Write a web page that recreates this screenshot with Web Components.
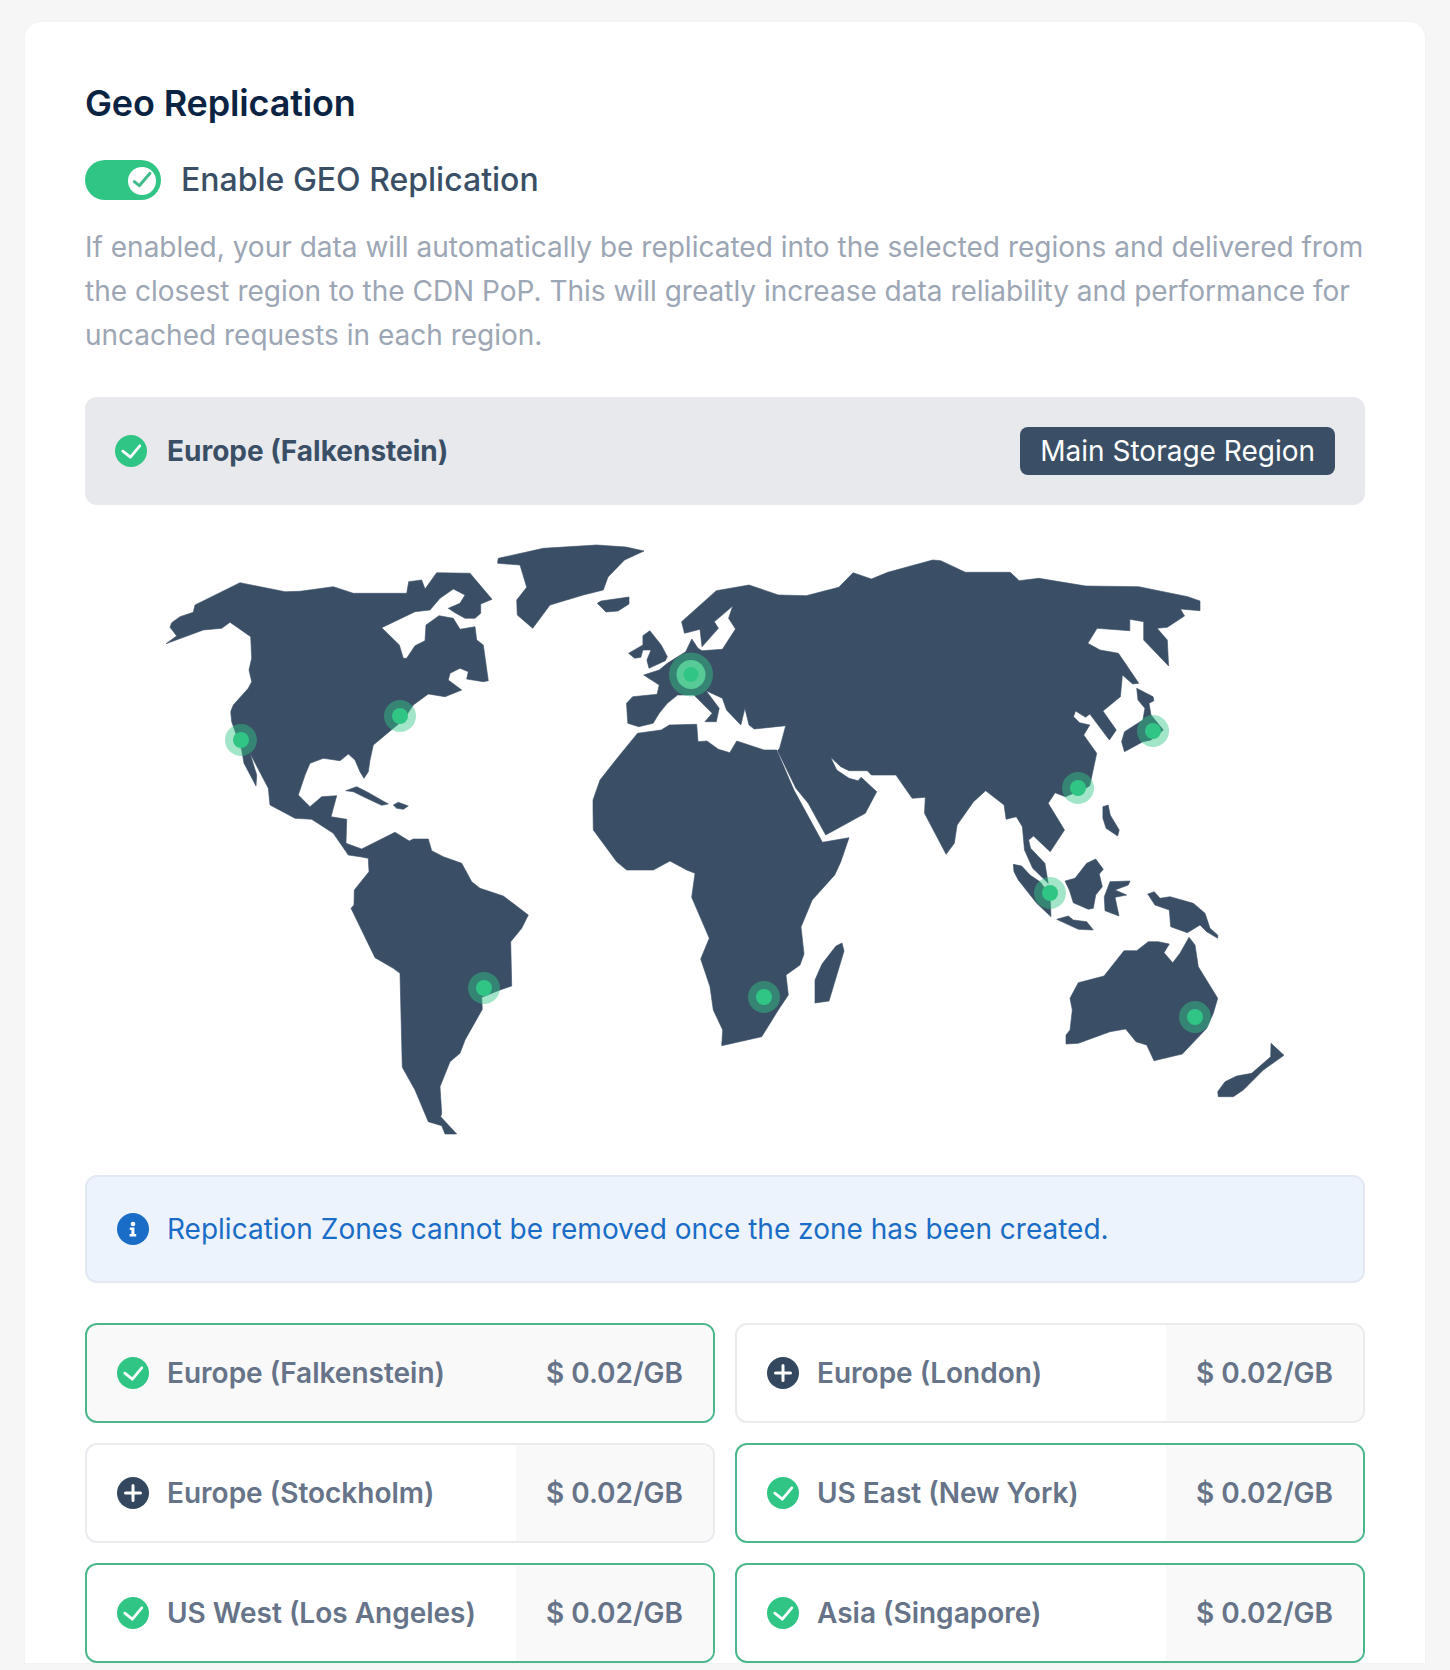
<!DOCTYPE html>
<html lang="en">
<head>
<meta charset="utf-8">
<title>Geo Replication</title>
<style>
html, body { margin: 0; height: 1670px; overflow: hidden; background: #f6f6f7; }
body { font-family: Inter, "Liberation Sans", sans-serif; padding: 22px 25px 0; box-sizing: border-box; }
</style>
</head>
<body>
<geo-card>
  <geo-heading>Geo Replication</geo-heading>
  <geo-toggle>Enable GEO Replication</geo-toggle>
  <geo-note>If enabled, your data will automatically be replicated into the selected regions and delivered from the closest region to the CDN PoP. This will greatly increase data reliability and performance for uncached requests in each region.</geo-note>
  <geo-banner badge="Main Storage Region">Europe (Falkenstein)</geo-banner>
  <world-map></world-map>
  <geo-alert>Replication Zones cannot be removed once the zone has been created.</geo-alert>
  <region-grid>
    <region-row selected main price="$ 0.02/GB">Europe (Falkenstein)</region-row>
    <region-row price="$ 0.02/GB">Europe (London)</region-row>
    <region-row price="$ 0.02/GB">Europe (Stockholm)</region-row>
    <region-row selected price="$ 0.02/GB">US East (New York)</region-row>
    <region-row selected price="$ 0.02/GB">US West (Los Angeles)</region-row>
    <region-row selected price="$ 0.02/GB">Asia (Singapore)</region-row>
  </region-grid>
</geo-card>
<script>
"use strict"
{
    const GREEN = '#31c585';
    const NAVY = '#3a4f66';

    // simple helper: every custom element here is just a style + markup in an open shadow root
    function define(tag, css, html, setup) {
        customElements.define(tag, class extends HTMLElement {
            constructor() {
                super();
                const shadow = this.attachShadow({ mode: 'open' });
                shadow.innerHTML = `<style>${css}</style>${html}`;
            }
            connectedCallback() {
                if (setup) setup(this, this.shadowRoot);
            }
        });
    }

    const icons = {
        check: `<circle cx="16" cy="16" r="16" fill="${GREEN}"/><path d="M7.8 16.2l7.6 6L24.8 10.8" fill="none" stroke="#fff" stroke-width="2.8" stroke-linecap="round" stroke-linejoin="round"/>`,
        plus: `<circle cx="16" cy="16" r="16" fill="#33475f"/><path d="M16 8.5v15M8.5 16h15" fill="none" stroke="#fff" stroke-width="3" stroke-linecap="round"/>`,
        info: `<circle cx="16" cy="16" r="16" fill="#1a6dc6"/><circle cx="16" cy="11" r="2.3" fill="#fff"/><path d="M12.8 14.6h4.6v6.4h1.8v2.4h-6.6v-2.4h1.8v-4h-1.6z" fill="#fff"/>`
    };

    define('geo-icon', `:host{display:block;width:32px;height:32px;flex:none}svg{display:block}`,
        `<svg width="32" height="32" viewBox="0 0 32 32"></svg>`,
        (el, root) => { root.querySelector('svg').innerHTML = icons[el.getAttribute('name')]; });

    define('geo-card', `
        :host{display:block;background:#fff;border-radius:16px 16px 0 0;padding:60px 60px 7px;height:1641px;box-sizing:border-box;box-shadow:0 0 0 1px #f3f3f4}
    `, `<slot></slot>`);

    define('geo-heading', `
        :host{display:block;font-size:36px;line-height:42px;font-weight:600;letter-spacing:-.15px;color:#0b2342;height:78px}
    `, `<slot></slot>`);

    define('geo-toggle', `
        :host{display:flex;align-items:center;gap:20px;height:40px;font-size:32px;font-weight:500;color:${NAVY}}
        .track{position:relative;width:76px;height:40px;border-radius:20px;background:${GREEN};flex:none}
        .knob{position:absolute;right:5px;top:7px;width:28px;height:28px;border-radius:50%;background:#fff}
        span{margin-bottom:2px}
        svg{display:block}
    `, `<div class="track"><div class="knob"><svg width="28" height="28" viewBox="0 0 28 28"><path d="M6.3 14.7l5 4L22 6.3" fill="none" stroke="#3dbb8a" stroke-width="3" stroke-linecap="round" stroke-linejoin="round"/></svg></div></div><span><slot></slot></span>`);

    define('geo-note', `
        :host{display:block;margin:25px 0 40px;font-size:28px;line-height:44px;color:#9ca6b4}
    `, `<slot></slot>`);

    define('geo-banner', `
        :host{display:flex;align-items:center;height:108px;box-sizing:border-box;padding:0 30px;background:#e7e9ed;border-radius:12px;font-size:28px;font-weight:700;color:${NAVY}}
        .name{margin-left:20px;flex:1}
        .badge{height:48px;line-height:48px;padding:0 20px;border-radius:8px;background:${NAVY};color:#fff;font-weight:400}
    `, `<geo-icon name="check"></geo-icon><span class="name"><slot></slot></span><span class="badge"></span>`,
        (el, root) => { root.querySelector('.badge').textContent = el.getAttribute('badge'); });

    // map outlines were traced from crops, so each crop gets its own origin and scale
    const seg = (ox, oy, sx, sy) => s => s.trim().split(/\s+/).map(p => {
        const [u, v] = p.split(',').map(Number);
        return (ox + u / sx).toFixed(1) + ' ' + (oy + v / sy).toFixed(1);
    });
    const am = seg(140, 530, 3, 3);
    const sa = seg(320, 820, 3, 3);
    const eu = seg(600, 540, 2.45, 3);
    const au = seg(950, 780, 3, 3);
    const pg = seg(0, 0, 1, 1);
    const poly = (...parts) => 'M' + parts.flat().join('L') + 'Z';

    const land = [
        // the Americas
        poly(am(`78,341 110,318 90,292 95,278 120,260 160,247 165,225 300,158 435,185 480,184 580,170 640,190 800,190 806,155 845,150 855,177 890,128 990,130 1056,208 1022,222 1022,250 1005,265 975,265 945,248 925,235 960,220 975,195 940,177 900,205 870,240 825,245 725,293 778,345 790,385 800,385 825,347 855,332 858,285 897,257 940,265 960,298 1005,290 1010,330 1030,345 1045,452 1030,455 980,447 985,425 960,415 930,430 925,450 965,480 915,500 865,492 820,525 790,570 700,645 690,690 685,725 672,745 660,725 645,690 625,672 600,692 550,685 510,700 495,735 475,795 510,830 545,800 590,797 573,860 620,868 618,940 665,957 765,907 808,933 820,927 865,927 875,962 910,980 965,1000 995,1055 1020,1075 1090,1098 1165,1155 1145,1195 1112,1235 1115,1368 1080,1380 1025,1402 1027,1438 975,1530 960,1570 930,1595 900,1670 905,1750 902,1760 950,1812 915,1812 905,1787 865,1775 825,1680 787,1612 780,1330 760,1315 705,1283 633,1135 642,1125 643,1080 687,1025 685,985 660,980 625,975 580,910 515,868 465,865 390,825 385,775 330,670 350,735 348,768 312,700 305,660 275,575 272,545 280,525 325,475 335,455 327,420 335,385 332,320 270,277 245,295 190,300`)),
        poly(am(`617,782 650,770 680,785 745,822 725,826 680,805 640,785`)),
        poly(am(`760,825 775,817 805,828 790,838 770,835`)),
        // greenland, iceland
        poly(am(`1073,95 1075,85 1210,55 1370,45`), pg(`626,547 644,551 624.5,560 608,577`), am(`1390,180 1330,195 1230,225 1178,295 1132,255 1130,210 1160,172 1140,105 1073,100`)),
        poly(pg(`597.3,603.3 601,601 629,597 629,604 618,611 606,612`)),
        // eurasia
        poly(eu(`200,245 285,152 365,135 437,165 505,167 585,142 620,98 665,117 705,97 815,60 835,62 895,97 1005,97 1027,122 1075,115 1190,138 1320,140 1440,170 1470,183 1470,212 1422,207 1432,228 1390,262 1365,265 1390,300 1393,378 1332,300 1332,245 1298,238 1298,272 1218,265 1195,310 1225,330 1270,340 1320,430 1305,432 1280,405 1275,470 1232,513 1265,570 1248,600 1200,522 1190,532 1165,513 1160,530 1175,548 1200,555 1185,585 1217,640 1200,737 1190,745 1140,770 1115,758 1098,790 1138,870 1103,935 1062,888 1050,900 1055,925 1090,970 1098,1030 1060,985 1040,930 1035,860 1020,830 995,838 990,795 945,752 915,785 875,855 868,910 848,943 795,820 797,772 765,775 725,705 665,705 655,692 610,692 590,680 565,652 580,690 610,715 632,722 640,712 678,755 650,820 553,885 510,790 480,745 435,632 440,625 455,557 378,567 365,555 355,505 345,555 310,510 300,475 260,452 292,505 285,545 257,545 275,520 230,465 190,465 165,490 145,520 130,550 95,560 68,550 65,490 80,470 140,463 145,435 107,405 145,390 165,370 210,335 225,297 240,325 250,332 300,328 332,267 315,235 325,198 280,245 290,265 250,320 245,268 207,280`)),
        poly(eu(`70,340 105,315 105,287 122,272 150,315 165,350 160,362 120,385 115,360 125,330 105,330 100,352 85,355`)),
        // japan
        poly(eu(`1315,445 1355,470 1357,482 1345,490 1350,525 1380,570 1350,600 1330,605 1285,635 1278,605 1285,575 1330,540 1335,505 1318,480`)),
        // africa
        poly(pg(`593,810 593,800`), eu(`0,720 45,650 92,580 150,570 170,555 237,553 240,605 262,603 290,628 318,638 335,603 402,630 433,630 475,750 545,907 610,893 590,965 575,1005 520,1080`), pg(`801,927 804,954`), sa(`1440,435 1398,465 1405,525 1375,570 1325,650 1205,677 1208,630 1180,570 1170,500 1142,417 1168,355 1115,232 1125,160 1100,150 1050,123 1000,150 920,150 890,125 820,30`)),
        poly(pg(`842,943 844,951 829,1001 815,1003 815,980 822,964 836,946`)),
        // south east asia, australia
        poly(eu(`1232,800 1245,795 1250,825 1272,870 1268,888 1240,865 1232,835`)),
        poly(au(`190,253 215,258 240,285 270,305 300,345 303,410 260,370 205,300 192,275`)),
        poly(au(`345,303 375,295 410,250 437,237 460,268 448,282 457,320 437,345 430,385 415,388 370,368 358,330`)),
        poly(au(`480,305 540,303 535,315 495,330 530,345 495,352 507,408 465,392 463,350`)),
        poly(au(`320,418 355,408 370,420 410,425 430,450 385,448`)),
        poly(au(`593,342 613,335 630,355 660,350 730,370 765,400 780,445 803,465 803,475 770,455 750,435 712,458 662,440 658,390 615,375`)),
        poly(au(`348,765 360,750 367,690 360,655 385,608 462,588 522,512 560,512 595,485 625,485 658,492 642,518 668,548 690,520 717,472 735,495 745,560 803,655 790,700 770,745 697,822 612,842 590,795 558,785 527,747 480,755 385,790 348,792`)),
        poly(au(`963,790 962,830 905,880 860,888 825,905 803,935 805,950 850,950 880,930 940,870 1002,826`))
    ];

    const pins = [[241, 740], [400, 716], [484, 988], [764, 997], [1078, 788], [1153, 731], [1050, 893], [1195, 1017]];
    const pinMarkup = pins.map(([x, y]) => `<circle cx="${x}" cy="${y}" r="16" fill="${GREEN}" fill-opacity=".45"/><circle cx="${x}" cy="${y}" r="8" fill="${GREEN}"/>`).join('');

    define('world-map', `:host{display:block;height:670px}svg{display:block}`,
        `<svg width="1280" height="670" viewBox="85 505 1280 670">
            <path d="${land.join('')}" fill="${NAVY}" stroke="${NAVY}" stroke-width=".6" stroke-linejoin="round"/>
            ${pinMarkup}
            <circle cx="691" cy="674.5" r="22" fill="${GREEN}" fill-opacity=".45"/>
            <circle cx="691" cy="674.5" r="14.5" fill="#57cb97"/>
            <circle cx="691" cy="674.5" r="7.5" fill="${GREEN}"/>
        </svg>`);

    define('geo-alert', `
        :host{display:flex;align-items:center;gap:18px;height:108px;box-sizing:border-box;padding:0 30px;background:#edf3fc;border:2px solid #e2e9f3;border-radius:12px;font-size:28px;color:#1a6dc6}
    `, `<geo-icon name="info"></geo-icon><span><slot></slot></span>`);

    define('region-grid', `
        :host{display:grid;grid-template-columns:1fr 1fr;gap:20px;margin-top:40px}
    `, `<slot></slot>`);

    define('region-row', `
        :host{display:flex;align-items:stretch;height:100px;box-sizing:border-box;border:2px solid #e9ebee;border-radius:12px;overflow:hidden;font-size:28px;font-weight:600;color:#667388;background:#fff}
        :host([selected]){border-color:#4cb68c}
        :host([main]){background:#f9f9fa}
        .name{display:flex;align-items:center;gap:18px;flex:1;padding-left:30px}
        .price{display:flex;align-items:center;justify-content:flex-end;box-sizing:border-box;width:197px;padding-right:30px;background:#f9f9fa}
    `, `<div class="name"><span class="icon"></span><span><slot></slot></span></div><div class="price"></div>`,
        (el, root) => {
            root.querySelector('.icon').innerHTML = `<geo-icon name="${el.hasAttribute('selected') ? 'check' : 'plus'}"></geo-icon>`;
            root.querySelector('.price').textContent = el.getAttribute('price');
        });
}
</script>
</body>
</html>
